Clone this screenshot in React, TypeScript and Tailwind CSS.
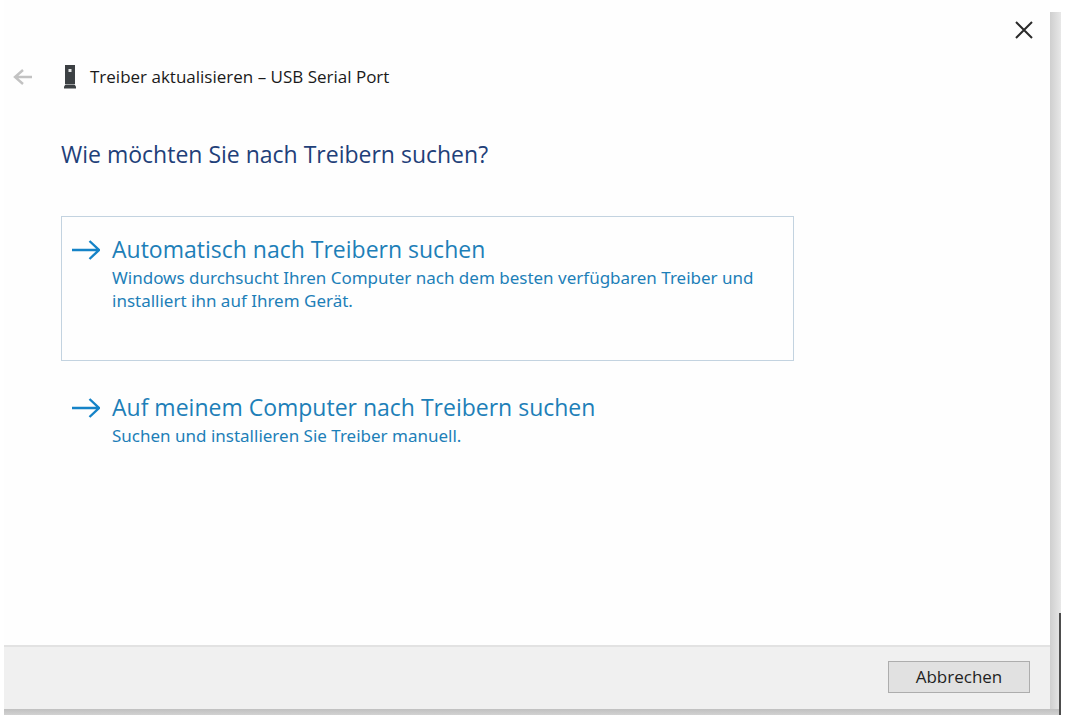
import React from 'react';

const options = [
  {
    title: "Automatisch nach Treibern suchen",
    text: "Windows durchsucht Ihren Computer nach dem besten verfügbaren Treiber und installiert ihn auf Ihrem Gerät.",
    style: "h-[145px] border-[#c3d3e0]"
  },
  {
    title: "Auf meinem Computer nach Treibern suchen",
    text: "Suchen und installieren Sie Treiber manuell.",
    style: "h-[100px] border-transparent"
  }
];

const ArrowIcon = () => (
  <svg className="w-7 h-5 mt-2 shrink-0" viewBox="0 0 28 20" fill="none" stroke="#1583c7" strokeWidth="2.4">
    <path d="M0 10H27M17.5 1L27 10L17.5 19" />
  </svg>
);

const App = () => {
  return (
    <div className="min-h-screen flex flex-col bg-white pl-1 pr-[11px] pb-[10px] font-['Open_Sans','Noto_Sans',sans-serif]">
      <div className="flex-1 flex">
        <main className="flex-1 flex flex-col bg-[#fefefe]">
          {/* Title bar */}
          <div className="flex justify-end pt-5 pr-4">
            <button aria-label="Schließen" className="w-5 h-5 flex items-center justify-center">
              <svg className="w-5 h-5" viewBox="0 0 20 20" fill="none" stroke="#2a2a2a" strokeWidth="2">
                <path d="M2 2L18 18M18 2L2 18" />
              </svg>
            </button>
          </div>

          {/* Wizard header */}
          <header className="flex items-center h-8 mt-[21px] pl-[9px]">
            <button aria-label="Zurück" className="w-5 h-5" disabled>
              <svg className="w-5 h-5" viewBox="0 0 20 20" fill="none" stroke="#c2c2c2" strokeWidth="2.4">
                <path d="M19 10H2M10 3L2 10L10 17" />
              </svg>
            </button>
            <svg className="w-3 h-6 ml-[31px] mr-[14px]" viewBox="0 0 12 24">
              <path d="M1 0H11V19H1Z" fill="#3c4043" />
              <path d="M0 21.5L1.5 19.5H10.5L12 21.5V23.5H0Z" fill="#3c4043" />
              <path d="M4.500 4H7.500V7H4.500Z" fill="#e3e5e6" />
            </svg>
            <span className="text-[17px] text-[#1a1a1a]">Treiber aktualisieren – USB Serial Port</span>
          </header>

          {/* Search options */}
          <section className="flex-1 pl-[57px] pr-4">
            <h1 className="mt-[45px] text-[23px] leading-8 text-[#1f4079]">Wie möchten Sie nach Treibern suchen?</h1>
            <div className="mt-[46px] flex flex-col gap-[13px] max-w-[733px]">
              {options.map((option) => (
                <button key={option.title} className={`flex items-start gap-3 border pt-[15px] pl-[10px] pr-5 text-left text-[#1d7fb8] ${option.style}`}>
                  <ArrowIcon />
                  <span>
                    <span className="block text-[23px] leading-[34px]">{option.title}</span>
                    <span className="block font-['Noto_Sans',sans-serif] text-[17px] leading-[23px]">{option.text}</span>
                  </span>
                </button>
              ))}
            </div>
          </section>

          <footer className="h-16 flex items-center justify-end pr-5 pb-[3px] bg-[#f0f0f0] border-t-2 border-[#e2e2e2]">
            <button className="w-[142px] h-8 flex items-center justify-center bg-[#e1e1e1] border border-[#adadad] text-[17px] text-[#1f1f1f]">
              Abbrechen
            </button>
          </footer>
        </main>

        {/* Window edge */}
        <div className="w-[11px] mt-3 flex flex-col justify-end items-end bg-linear-to-r from-[#cfcfcf] to-[#e8e8e8]">
          <div className="w-0.5 h-24 bg-[#4d4d4d]" />
        </div>
      </div>
      <div className="h-1.5 flex justify-end bg-linear-to-b from-[#c0c0c0] to-[#d2d2d2]">
        <div className="w-0.5 bg-[#4d4d4d]" />
      </div>
    </div>
  );
};

export default App;
